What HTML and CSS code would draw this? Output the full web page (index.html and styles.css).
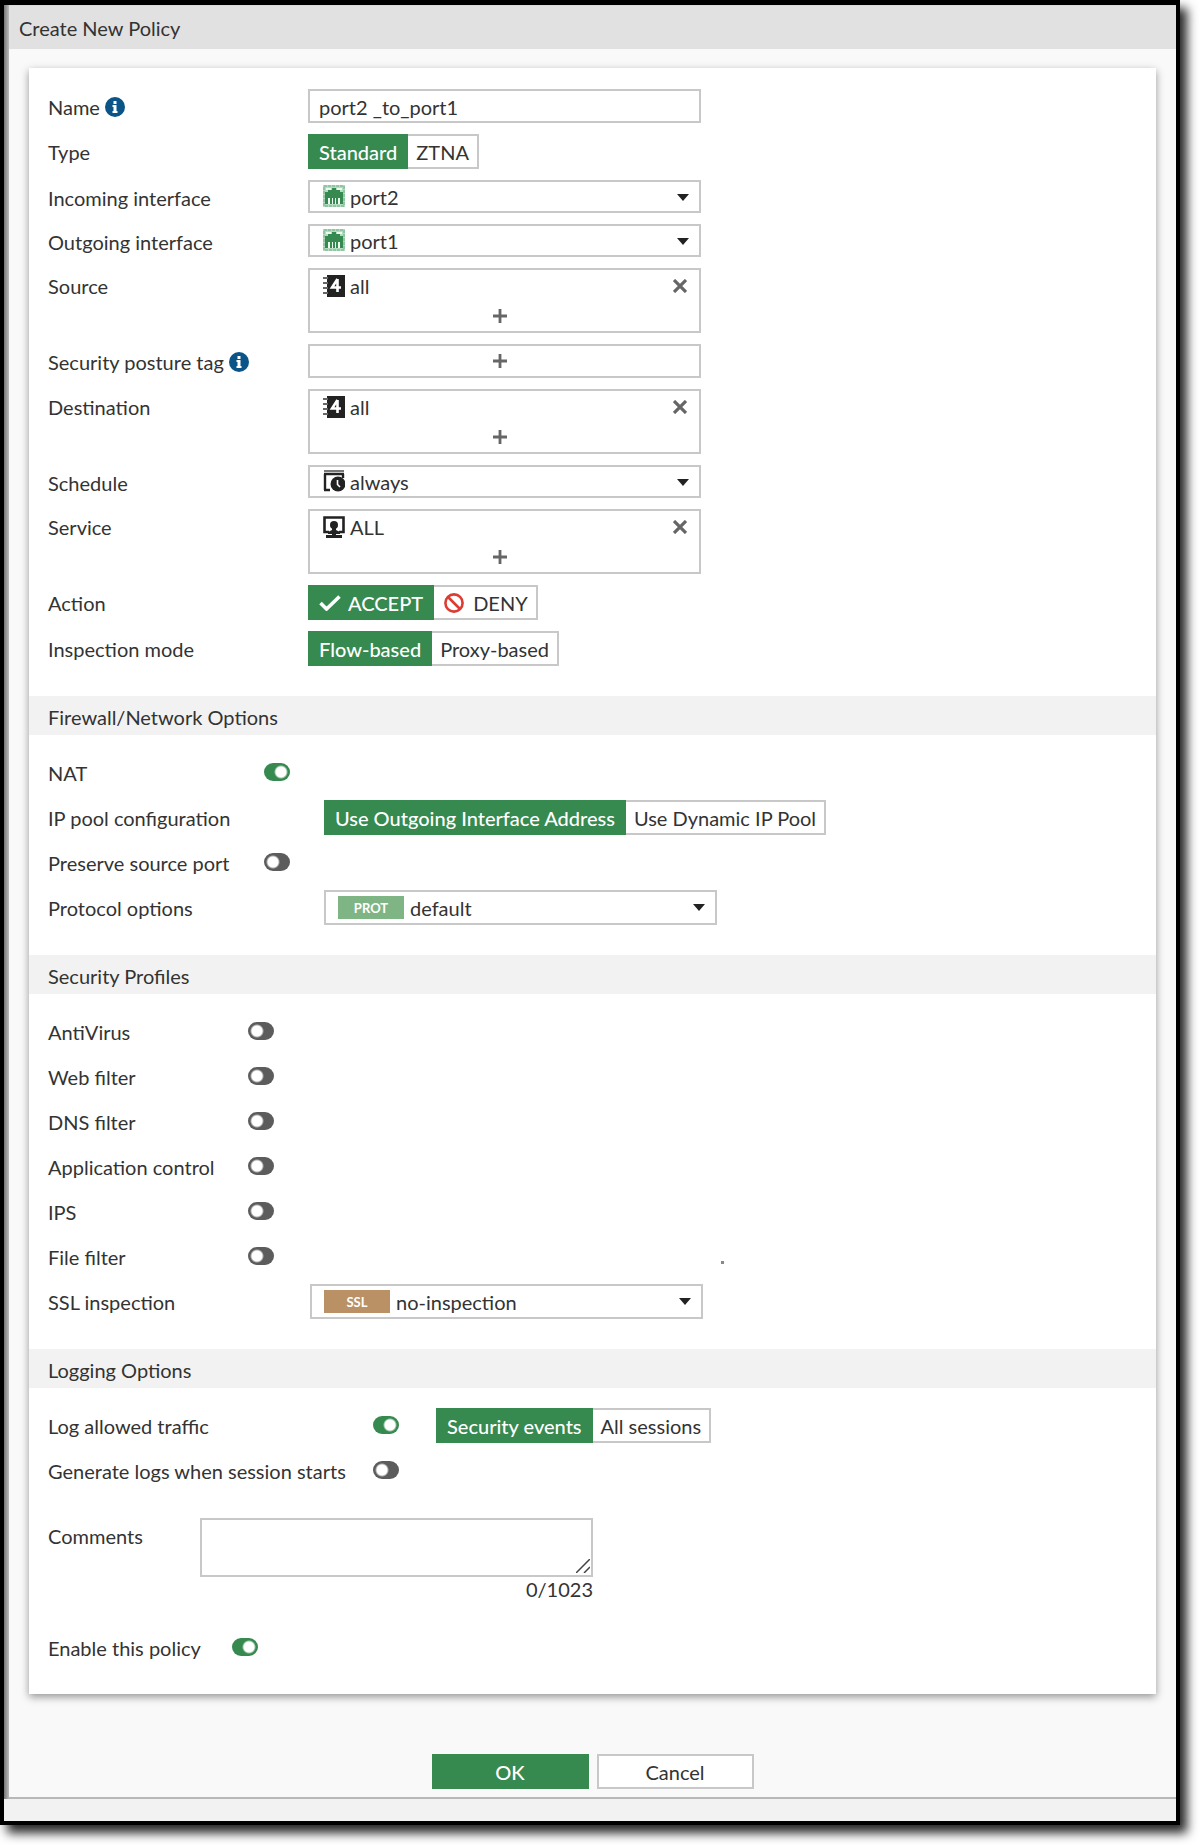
FILE: index.html
```html
<!DOCTYPE html>
<html lang="en">
<head>
  <meta charset="UTF-8" />
  <meta name="viewport" content="width=device-width, initial-scale=1.0" />
  <title>Create New Policy</title>
  <link rel="stylesheet" href="styles.css">
</head>
<body>
  <!-- Shared icons -->
  <svg class="sprite" aria-hidden="true">
    <symbol id="icon-port" viewBox="0 0 22 22">
      <rect width="22" height="22" fill="#b5dcc1"/>
      <rect x="1" y="1" width="20" height="20" fill="none" stroke="#6fae83" stroke-dasharray="3 1"/>
      <path d="M3 3h5v2H3zM14 3h5v2h-5z" fill="#eef8f1"/>
      <path d="M9 3h4v2h4v2h3v12H2V7h3V5h4z" fill="#36894f"/>
      <path d="M5 13h2v6H5zM9 13h1v6H9zM12 13h1v6h-1zM15 13h2v6h-2z" fill="#eef8f1"/>
    </symbol>
    <symbol id="icon-address" viewBox="0 0 22 22">
      <path d="M4 0h18v22H4z" fill="#222"/>
      <path d="M0 3h5M0 8h5M0 13h5M0 18h5" stroke="#666" stroke-width="2"/>
      <path d="M14.500 4v13M14.500 4L9 12.500h9" fill="none" stroke="#fff" stroke-width="2.600"/>
    </symbol>
    <symbol id="icon-schedule" viewBox="0 0 22 22">
      <path d="M1 1h20" stroke="#777" stroke-width="2"/>
      <path d="M1 4h20M2 4v16M20 4v4M1 20h6" fill="none" stroke="#222" stroke-width="2.400"/>
      <circle cx="15" cy="14" r="7.500" fill="#222"/>
      <path d="M14.500 10v4.500l2.500 2.500" fill="none" stroke="#fff" stroke-width="1.600"/>
    </symbol>
    <symbol id="icon-service" viewBox="0 0 22 22">
      <path d="M6 16H1.500V1.500h19V16H16" fill="none" stroke="#222" stroke-width="2.600"/>
      <circle cx="11" cy="9" r="4" fill="#222"/>
      <path d="M9 10h4v4l4 2v2h-4v1h6v3H3v-3h6v-1H5v-2l4-2z" fill="#222"/>
    </symbol>
    <symbol id="icon-info" viewBox="0 0 20 20">
      <circle cx="10" cy="10" r="10" fill="#0b5487"/>
      <path d="M8.500 4h3v3h-3zM7.500 8h4v6h1v2h-5v-2h1v-4h-1z" fill="#fff"/>
    </symbol>
    <symbol id="icon-caret" viewBox="0 0 12 7">
      <path d="M0 0h12L6 7z" fill="#222"/>
    </symbol>
    <symbol id="icon-plus" viewBox="0 0 14 14">
      <path d="M7 0v14M0 7h14" stroke="#666" stroke-width="2.800"/>
    </symbol>
    <symbol id="icon-close" viewBox="0 0 14 14">
      <path d="M1 1l12 12M13 1L1 13" stroke="#666" stroke-width="3.200"/>
    </symbol>
    <symbol id="icon-check" viewBox="0 0 22 16">
      <path d="M1.500 8l6 6L20.500 1.500" fill="none" stroke="#fff" stroke-width="3.600"/>
    </symbol>
    <symbol id="icon-deny" viewBox="0 0 20 20">
      <circle cx="10" cy="10" r="8.600" fill="none" stroke="#dc3c32" stroke-width="2.600"/>
      <path d="M4 4l12 12" stroke="#dc3c32" stroke-width="2.600"/>
    </symbol>
  </svg>

  <div class="window">
    <div class="dialog">
      <h1 class="dialog-title">Create New Policy</h1>

      <form class="card" id="policy">
        <div class="section">
          <div class="row">
            <label class="label" for="name">Name <svg class="info"><use href="#icon-info"/></svg></label>
            <input class="field" id="name" type="text" value="port2 _to_port1">
          </div>
          <div class="row">
            <span class="label" id="type-label">Type</span>
            <div class="segmented" role="radiogroup" aria-labelledby="type-label">
              <label><input type="radio" name="type" checked><span>Standard</span></label>
              <label><input type="radio" name="type"><span>ZTNA</span></label>
            </div>
          </div>
          <div class="row">
            <label class="label" for="incoming">Incoming interface</label>
            <div class="select">
              <svg class="select-icon"><use href="#icon-port"/></svg>
              <select id="incoming"><option>port2</option></select>
              <svg class="caret"><use href="#icon-caret"/></svg>
            </div>
          </div>
          <div class="row">
            <label class="label" for="outgoing">Outgoing interface</label>
            <div class="select">
              <svg class="select-icon"><use href="#icon-port"/></svg>
              <select id="outgoing"><option>port1</option></select>
              <svg class="caret"><use href="#icon-caret"/></svg>
            </div>
          </div>
          <div class="row">
            <span class="label">Source</span>
            <div class="picker">
              <div class="picker-item">
                <svg class="icon"><use href="#icon-address"/></svg>
                <span>all</span>
                <button type="button" class="remove" aria-label="Remove all"><svg><use href="#icon-close"/></svg></button>
              </div>
              <button type="button" class="add" aria-label="Add source"><svg><use href="#icon-plus"/></svg></button>
            </div>
          </div>
          <div class="row">
            <span class="label">Security posture tag <svg class="info"><use href="#icon-info"/></svg></span>
            <div class="picker">
              <button type="button" class="add" aria-label="Add security posture tag"><svg><use href="#icon-plus"/></svg></button>
            </div>
          </div>
          <div class="row">
            <span class="label">Destination</span>
            <div class="picker">
              <div class="picker-item">
                <svg class="icon"><use href="#icon-address"/></svg>
                <span>all</span>
                <button type="button" class="remove" aria-label="Remove all"><svg><use href="#icon-close"/></svg></button>
              </div>
              <button type="button" class="add" aria-label="Add destination"><svg><use href="#icon-plus"/></svg></button>
            </div>
          </div>
          <div class="row">
            <label class="label" for="schedule">Schedule</label>
            <div class="select">
              <svg class="select-icon"><use href="#icon-schedule"/></svg>
              <select id="schedule"><option>always</option></select>
              <svg class="caret"><use href="#icon-caret"/></svg>
            </div>
          </div>
          <div class="row">
            <span class="label">Service</span>
            <div class="picker">
              <div class="picker-item">
                <svg class="icon"><use href="#icon-service"/></svg>
                <span>ALL</span>
                <button type="button" class="remove" aria-label="Remove ALL"><svg><use href="#icon-close"/></svg></button>
              </div>
              <button type="button" class="add" aria-label="Add service"><svg><use href="#icon-plus"/></svg></button>
            </div>
          </div>
          <div class="row">
            <span class="label" id="action-label">Action</span>
            <div class="segmented" role="radiogroup" aria-labelledby="action-label">
              <label><input type="radio" name="action" checked><span><svg class="check"><use href="#icon-check"/></svg>ACCEPT</span></label>
              <label><input type="radio" name="action"><span><svg class="deny"><use href="#icon-deny"/></svg>DENY</span></label>
            </div>
          </div>
          <div class="row">
            <span class="label" id="mode-label">Inspection mode</span>
            <div class="segmented" role="radiogroup" aria-labelledby="mode-label">
              <label><input type="radio" name="mode" checked><span>Flow-based</span></label>
              <label><input type="radio" name="mode"><span>Proxy-based</span></label>
            </div>
          </div>
        </div>

        <h2 class="section-title">Firewall/Network Options</h2>
        <div class="section section-network">
          <div class="row">
            <label class="label" for="nat">NAT</label>
            <input class="toggle" id="nat" type="checkbox" checked>
          </div>
          <div class="row">
            <span class="label" id="pool-label">IP pool configuration</span>
            <div class="segmented" role="radiogroup" aria-labelledby="pool-label">
              <label><input type="radio" name="pool" checked><span>Use Outgoing Interface Address</span></label>
              <label><input type="radio" name="pool"><span>Use Dynamic IP Pool</span></label>
            </div>
          </div>
          <div class="row">
            <label class="label" for="preserve">Preserve source port</label>
            <input class="toggle" id="preserve" type="checkbox">
          </div>
          <div class="row">
            <label class="label" for="protocol">Protocol options</label>
            <div class="select tagged">
              <span class="tag tag-prot">PROT</span>
              <select id="protocol"><option>default</option></select>
              <svg class="caret"><use href="#icon-caret"/></svg>
            </div>
          </div>
        </div>

        <h2 class="section-title">Security Profiles</h2>
        <div class="section section-profiles">
          <div class="row">
            <label class="label" for="antivirus">AntiVirus</label>
            <input class="toggle" id="antivirus" type="checkbox">
          </div>
          <div class="row">
            <label class="label" for="web">Web filter</label>
            <input class="toggle" id="web" type="checkbox">
          </div>
          <div class="row">
            <label class="label" for="dns">DNS filter</label>
            <input class="toggle" id="dns" type="checkbox">
          </div>
          <div class="row">
            <label class="label" for="appctrl">Application control</label>
            <input class="toggle" id="appctrl" type="checkbox">
          </div>
          <div class="row">
            <label class="label" for="ips">IPS</label>
            <input class="toggle" id="ips" type="checkbox">
          </div>
          <div class="row">
            <label class="label" for="file">File filter</label>
            <input class="toggle" id="file" type="checkbox">
            <span class="speck"></span>
          </div>
          <div class="row">
            <label class="label" for="ssl">SSL inspection</label>
            <div class="select tagged">
              <span class="tag tag-ssl">SSL</span>
              <select id="ssl"><option>no-inspection</option></select>
              <svg class="caret"><use href="#icon-caret"/></svg>
            </div>
          </div>
        </div>

        <h2 class="section-title">Logging Options</h2>
        <div class="section section-logging">
          <div class="row">
            <label class="label" for="log">Log allowed traffic</label>
            <input class="toggle" id="log" type="checkbox" checked>
            <div class="segmented" role="radiogroup" aria-label="Log allowed traffic">
              <label><input type="radio" name="log-type" checked><span>Security events</span></label>
              <label><input type="radio" name="log-type"><span>All sessions</span></label>
            </div>
          </div>
          <div class="row">
            <label class="label" for="logstart">Generate logs when session starts</label>
            <input class="toggle" id="logstart" type="checkbox">
          </div>
        </div>

        <div class="comments">
          <label class="label" for="comments">Comments</label>
          <div class="comments-box">
            <textarea id="comments"></textarea>
            <svg class="grip" viewBox="0 0 14 14"><path d="M0 14L14 0M8 14l6-6" stroke="#444" stroke-width="1.500"/></svg>
            <div class="counter">0/1023</div>
          </div>
        </div>

        <div class="row row-enable">
          <label class="label" for="enable">Enable this policy</label>
          <input class="toggle" id="enable" type="checkbox" checked>
        </div>
      </form>

      <div class="actions">
        <button type="submit" form="policy" class="btn btn-primary">OK</button>
        <button type="button" class="btn">Cancel</button>
      </div>
    </div>
    <div class="statusbar"></div>
  </div>
</body>
</html>
```

FILE: styles.css
```css
* {
  box-sizing: border-box;
}

body {
  margin: 0;
  background: #fff;
  color: #333;
  font-family: Lato, "Liberation Sans", sans-serif;
  font-size: 20px;
  line-height: 24px;
}

input,
select,
textarea,
button {
  font: inherit;
  color: #333;
}

.sprite {
  position: absolute;
  width: 0;
  height: 0;
}

.window {
  margin: 0 20px 20px 0;
  border: 4px solid #000;
  border-top-width: 5px;
  background: linear-gradient(to right, #777, #bbb 5px);
  box-shadow: 7px 8px 10px rgba(0, 0, 0, 0.85);
}

.dialog {
  margin-left: 5px;
  background: #f9f9f9;
}

.dialog-title {
  margin: 0;
  padding: 11px 10px 9px;
  background: #e1e1e1;
  border-top: 1px solid #c8e4d8;
  font-size: 20px;
  font-weight: 400;
  line-height: 23px;
}

.card {
  margin: 19px 20px 0;
  padding-bottom: 34px;
  background: #fff;
  box-shadow: 0 3px 8px rgba(0, 0, 0, 0.4);
}

.section {
  display: flex;
  flex-direction: column;
  gap: 11px;
  padding: 21px 19px 30px;
}

.section-title {
  margin: 0;
  padding: 9px 19px 6px;
  background: #f2f2f2;
  font-size: 20px;
  font-weight: 400;
  line-height: 24px;
}

.row {
  display: flex;
  align-items: flex-start;
}

.label {
  flex: none;
  width: 260px;
  padding-top: 6px;
}

.info {
  width: 20px;
  height: 20px;
  vertical-align: -2px;
}

.field {
  width: 393px;
  height: 34px;
  padding: 1px 9px 0;
  border: 2px solid #c8c8c8;
  background: #fff;
}

/* Drop-downs */
.select {
  position: relative;
  width: 393px;
}

.select select {
  display: block;
  width: 100%;
  height: 33px;
  padding: 1px 30px 0 40px;
  appearance: none;
  border: 2px solid #c8c8c8;
  border-radius: 0;
  background: #fff;
}

.select-icon {
  position: absolute;
  top: 5px;
  left: 15px;
  width: 22px;
  height: 22px;
}

.caret {
  position: absolute;
  top: 14px;
  right: 12px;
  width: 12px;
  height: 7px;
}

.tagged select {
  height: 35px;
  padding-left: 84px;
}

.tag {
  position: absolute;
  top: 6px;
  left: 14px;
  width: 66px;
  height: 23px;
  color: #fff;
  font-size: 13px;
  font-weight: 700;
  line-height: 24px;
  text-align: center;
}

.tag-prot {
  background: #7fb585;
}

.tag-ssl {
  background: #b99164;
}

/* Object pickers */
.picker {
  width: 393px;
  border: 2px solid #c8c8c8;
  background: #fff;
}

.picker-item {
  display: flex;
  align-items: center;
  gap: 5px;
  height: 31px;
  padding: 0 12px 0 13px;
}

.icon {
  width: 22px;
  height: 22px;
}

.remove {
  display: flex;
  margin-left: auto;
  padding: 0;
  border: 0;
  background: none;
}

.remove svg,
.add svg {
  width: 14px;
  height: 14px;
}

.add {
  display: flex;
  align-items: center;
  justify-content: center;
  width: 100%;
  height: 30px;
  padding: 0 10px 0 0;
  border: 0;
  background: none;
}

/* Button groups */
.segmented {
  display: flex;
}

.segmented label {
  position: relative;
}

.segmented input {
  position: absolute;
  margin: 0;
  opacity: 0;
}

.segmented span {
  display: flex;
  align-items: center;
  height: 35px;
  padding: 1px 8px 0;
  border: 2px solid #c8c8c8;
  border-left-width: 0;
  background: #fff;
}

.segmented input:checked + span {
  padding: 1px 9px 0 11px;
  border-color: #36894f;
  background: #36894f;
  color: #fff;
  font-weight: 500;
}

.check {
  width: 22px;
  height: 16px;
  margin-right: 7px;
}

.deny {
  width: 20px;
  height: 20px;
  margin: 0 9px 0 2px;
}

/* Switches */
.toggle {
  flex: none;
  width: 26px;
  height: 18px;
  margin: 8px 0 0;
  appearance: none;
  border-radius: 9px;
  background: radial-gradient(circle at 9px 9px, #fff 5px, #5c5c5c 7px);
}

.toggle:checked {
  background: radial-gradient(circle at 17px 9px, #fff 5px, #36894f 7px);
}

.section-network,
.section-profiles,
.section-logging {
  gap: 10px;
  padding-top: 20px;
}

.section-network .row,
.section-profiles .row,
.section-logging .row {
  min-height: 35px;
}

.section-network .label {
  width: 216px;
}

.section-network .segmented,
.section-network .select {
  margin-left: 60px;
}

.section-profiles .label {
  width: 200px;
}

.section-profiles .select {
  margin-left: 62px;
}

.speck {
  width: 3px;
  height: 3px;
  margin: 22px 0 0 447px;
  background: #888;
}

.section-logging .label {
  width: 325px;
}

.section-logging .segmented {
  margin-left: 37px;
}

.comments {
  display: flex;
  padding: 0 19px;
}

.comments .label {
  width: 152px;
}

.comments-box {
  position: relative;
  width: 393px;
}

.comments-box textarea {
  display: block;
  width: 100%;
  height: 59px;
  border: 2px solid #c8c8c8;
  resize: none;
}

.grip {
  position: absolute;
  top: 41px;
  right: 3px;
  width: 14px;
  height: 14px;
}

.counter {
  text-align: right;
}

.row-enable {
  padding: 29px 19px 0;
}

.row-enable .label {
  width: 184px;
}

.actions {
  display: flex;
  justify-content: center;
  gap: 8px;
  padding: 60px 0 8px;
  border-bottom: 2px solid #b8b8b8;
}

.btn {
  width: 157px;
  height: 35px;
  padding: 1px 0 0;
  border: 2px solid #c8c8c8;
  background: #fff;
}

.btn-primary {
  border-color: #36894f;
  background: #36894f;
  color: #fff;
  font-weight: 500;
}

.statusbar {
  height: 22px;
  background: #f2f2f2;
}
```
